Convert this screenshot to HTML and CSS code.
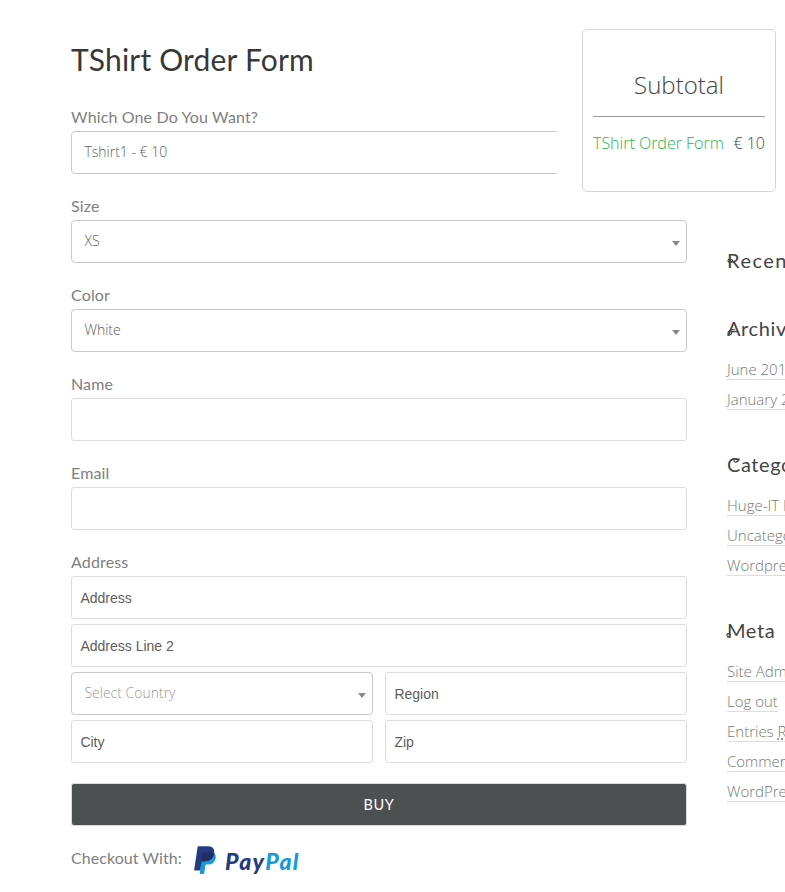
FILE: index.html
```html
<!DOCTYPE html>
<html lang="en">
<head>
<meta charset="utf-8">
<title>TShirt Order Form</title>
<link rel="stylesheet" href="styles.css">
</head>
<body>
<div class="page">
  <main class="form">
    <h1 class="title">TShirt Order Form</h1>
    <div class="group"><div class="label">Which One Do You Want?</div><div class="field select"><span>Tshirt1 - € 10</span></div></div>
    <div class="group"><div class="label">Size</div><div class="field select"><span>XS</span><i class="arrow"></i></div></div>
    <div class="group"><div class="label">Color</div><div class="field select"><span>White</span><i class="arrow"></i></div></div>
    <div class="group"><div class="label">Name</div><div class="field"></div></div>
    <div class="group"><div class="label">Email</div><div class="field"></div></div>
    <div class="group">
      <div class="label">Address</div>
      <div class="address">
        <div class="field wide">Address</div>
        <div class="field wide">Address Line 2</div>
        <div class="field select muted"><span>Select Country</span><i class="arrow"></i></div>
        <div class="field">Region</div>
        <div class="field">City</div>
        <div class="field">Zip</div>
      </div>
    </div>
    <div class="buy">BUY</div>
    <div class="checkout">
      <span class="checkout-label">Checkout With:</span>
      <svg class="mark" viewBox="0 0 22 28" width="22" height="28">
        <path fill="#179bd7" d="M8 8 20 6.500Q22.500 9.500 21.500 13Q20 18.500 14 18.500H12.500Q11.500 18.500 11.300 19.800L10.300 26.700Q10.100 28 9 28H6.500Q5.600 28 5.800 27Z"/>
        <path fill="#253b80" d="M4.800.2H13.500Q19.500.2 20.200 4.500Q20.600 7 19.400 9.800Q17.400 15.200 11 15.200H8.800Q7.700 15.200 7.500 16.400L6.200 24.600H.8Q0 24.600.2 23.700L3.500 1.400Q3.700.2 4.800.2Z"/>
        <path fill="#222d65" d="M9 6.500H16.500Q18.600 6.500 20.200 7.300Q19 15.200 11 15.200H8.800Q7.900 15.200 7.600 16.100L8.100 7.500Q8.200 6.500 9 6.500Z"/>
      </svg>
      <span class="paypal">Pay<b>Pal</b></span>
    </div>
  </main>
  <aside class="sidebar">
    <section class="recent"><h2>Recent<svg class="swash" viewBox="0 0 14 30"><path d="M8 16C4 18 .8 17.500 1 15.500S5 13.500 6 16"/></svg></h2></section>
    <section><h2>Archives<svg class="swash" viewBox="0 0 14 30"><path d="M8 17C4 16 .8 18 1 20.500S5 22 5 19"/></svg></h2><ul><li><a>June 2017</a></li><li><a>January 2017</a></li></ul></section>
    <section><h2>Categories<svg class="swash" viewBox="0 0 14 30"><path d="M12 9.500C11 14 7 14 7 11.500S10 9.500 10 11"/></svg></h2><ul><li><a>Huge-IT Forms</a></li><li><a>Uncategorized</a></li><li><a>Wordpress</a></li></ul></section>
    <section><h2>Meta<svg class="swash" viewBox="0 0 14 30"><path d="M3 20.500C1 23.500-.5 21 0 19.500S3 18.500 3 20"/></svg></h2><ul><li><a>Site Admin</a></li><li><a>Log out</a></li><li><a>Entries <abbr>RSS</abbr></a></li><li><a>Comments RSS</a></li><li><a>WordPress.org</a></li></ul></section>
  </aside>
  <div class="overlay">
    <div class="card">
      <h3>Subtotal</h3>
      <div class="row"><span class="item">TShirt Order Form</span><span class="price">€ 10</span></div>
    </div>
  </div>
</div>
</body>
</html>
```
FILE: styles.css
```css
* { box-sizing: border-box; }
body { margin: 0; background: #fff; font-family: "Open Sans", sans-serif; font-weight: 300; overflow: hidden; }
.page { position: relative; display: flex; gap: 40px; width: 785px; height: 892px; padding-left: 71px; overflow: hidden; }
.form { flex: 0 0 616px; padding-top: 39px; }
.title { height: 40px; margin: 0 0 25px; font: 400 30px/40px Lato, sans-serif; color: #383838; letter-spacing: .18px; white-space: nowrap; }
.group { margin-bottom: 19px; }
.label { height: 27px; font: 400 16px/26px Lato, sans-serif; color: #808080; letter-spacing: .14px; }
.field { display: flex; align-items: center; height: 43px; padding: 0 8.4px; border: 1px solid #ddd; border-radius: 3px; background: #fff; font: 400 14px/20px "Liberation Sans", sans-serif; color: #5c5c5c; white-space: pre; }
.select { justify-content: space-between; padding: 0 6px 1px 12.4px; border-color: #c9c9c9; border-radius: 4px; font: 300 14px/20px "Open Sans", sans-serif; }
.muted { color: #999; }
.arrow { width: 0; height: 0; margin-top: 5px; border: 4px solid transparent; border-top: 5px solid #888; border-bottom: 0; }
.address { display: grid; grid-template-columns: 1fr 1fr; gap: 5px 12px; }
.wide { grid-column: span 2; }
.buy { height: 43px; margin-top: 20px; border: 1px solid #d9dcdc; border-radius: 3px; background: #4c5050; color: #fff; font: 400 14.5px/41px Lato, sans-serif; letter-spacing: .7px; text-align: center; }
.checkout { display: flex; align-items: center; height: 28px; margin-top: 20px; font: 400 16px/28px Lato, sans-serif; color: #808080; }
.checkout-label { width: 123px; letter-spacing: .06px; height: 30px; line-height: 26px; }
.mark { display: block; margin-right: 9px; }
.paypal { font: italic 900 23px/28px Lato, sans-serif; color: #253b80; padding-top: 2px; letter-spacing: 1.35px; }
.paypal b { font-weight: 900; color: #179bd7; }
.sidebar { flex: 0 0 220px; padding-top: 245px; }
.sidebar h2 { position: relative; height: 30px; margin: 0; font: 400 20px/30px Lato, sans-serif; color: #444; white-space: nowrap; letter-spacing: .6px; }
.swash { position: absolute; left: 0; top: 0; width: 14px; height: 30px; fill: none; stroke: #444; stroke-width: 1.2; overflow: visible; }
.sidebar section { margin-bottom: 36px; }
.sidebar .recent { margin-bottom: 38px; }
.sidebar .recent h2 { letter-spacing: 1.5px; }
.sidebar ul { list-style: none; margin: 0; padding: 10px 0 0; }
.sidebar li { height: 30px; font-size: 15px; line-height: 30px; white-space: nowrap; color: #777; }
.sidebar a { display: inline-block; height: 21px; line-height: 20px; border-bottom: 1px solid #ddd; vertical-align: middle; }
.sidebar abbr { text-decoration: underline dotted; }
.overlay { position: absolute; left: 557px; top: 0; width: 228px; height: 217px; padding: 29px 0 0 25px; background: #fff; }
.card { width: 194px; height: 163px; padding: 33px 10px 0; border: 1px solid #d5d5d5; border-radius: 5px; }
.card h3 { height: 54px; margin: 0; border-bottom: 1px solid #999; font-size: 24px; font-weight: 300; line-height: 44px; text-align: center; color: #444; }
.row { display: flex; justify-content: space-between; margin-top: 13px; font-size: 16px; line-height: 26px; color: #444; white-space: nowrap; }
.item { color: #29b352; }
```
